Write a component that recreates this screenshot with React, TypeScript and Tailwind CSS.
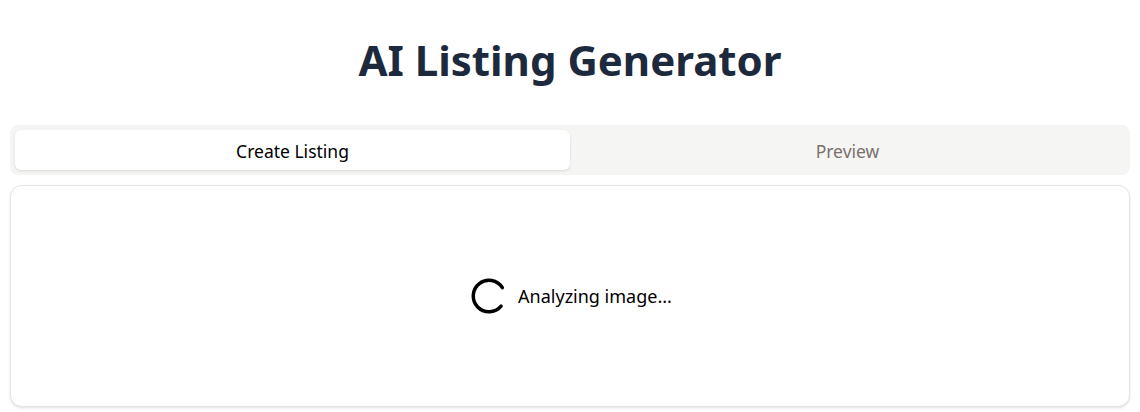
import { LoaderCircle } from 'lucide-react';

export default function App() {
  return (
    <div className="min-h-screen bg-white px-[10px] font-['Noto_Sans',sans-serif]">
      <h1 className="pt-[35px] pb-[40px] text-center text-[42px] leading-[50px] font-bold text-slate-800">
        AI Listing Generator
      </h1>

      <div className="flex rounded-lg bg-stone-100 p-[5px]">
        <button className="h-10 flex-1 rounded-md bg-white pt-0.5 text-[17.5px] text-black shadow-sm">
          Create Listing
        </button>
        <button className="h-10 flex-1 rounded-md pt-0.5 text-[17.5px] text-stone-500">
          Preview
        </button>
      </div>

      <div className="mt-[10px] flex h-[222px] items-center justify-center rounded-xl border border-neutral-200 bg-white shadow-sm">
        <div className="flex items-center gap-2">
          <LoaderCircle size={42} strokeWidth={2} className="rotate-[40deg] text-black" />
          <span className="text-lg text-black">Analyzing image...</span>
        </div>
      </div>
    </div>
  );
}
